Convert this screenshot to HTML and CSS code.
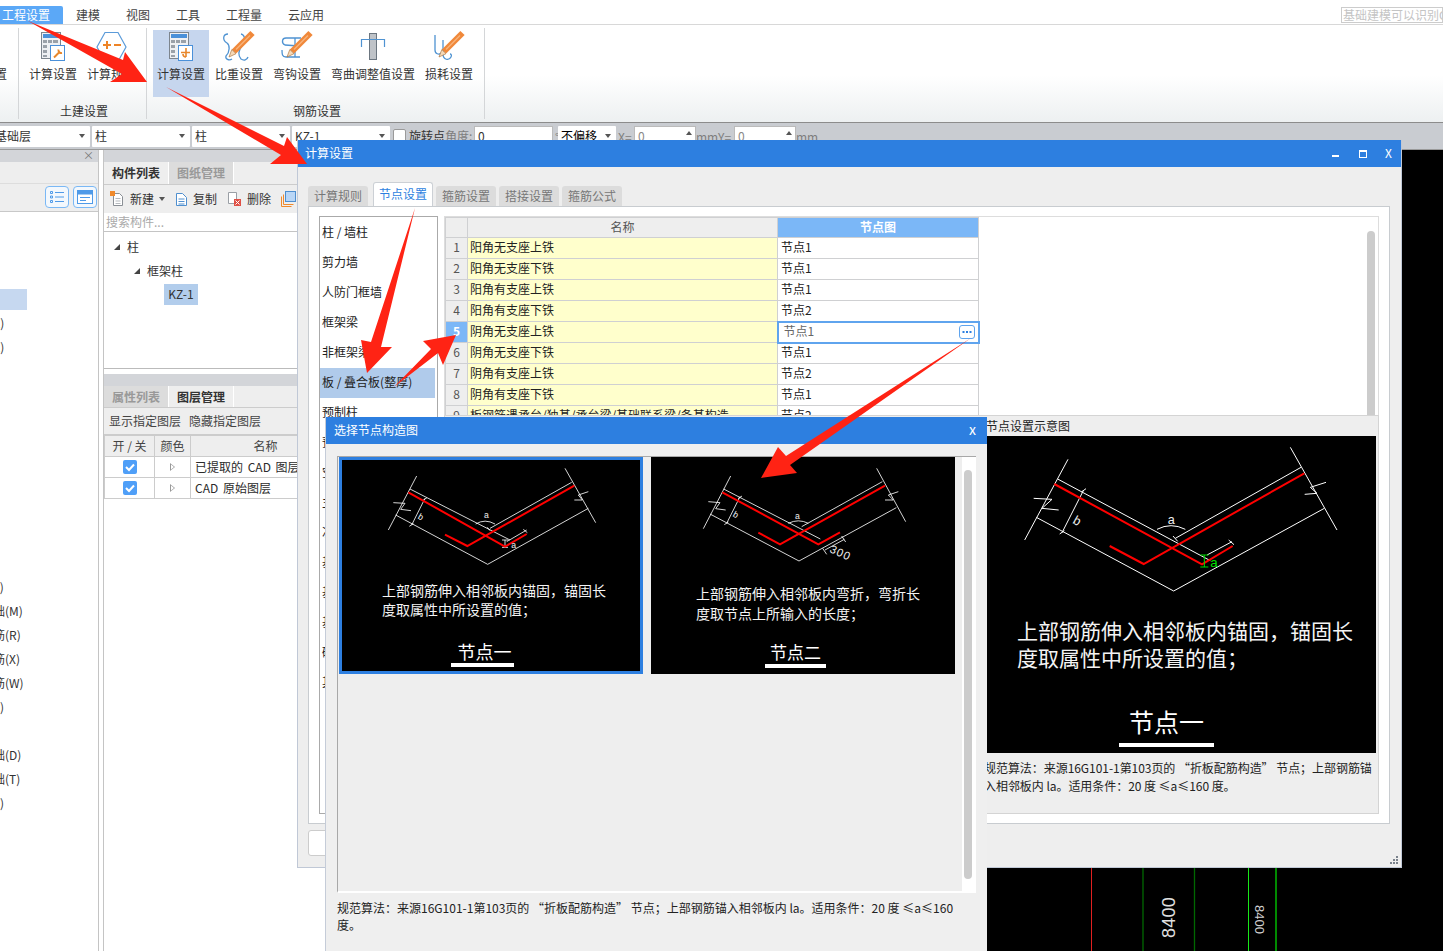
FILE: index.html
```html
<!DOCTYPE html>
<html lang="zh">
<head>
<meta charset="utf-8">
<title>计算设置</title>
<link rel="stylesheet" href="styles.css">
</head>
<body>
<svg class="defs" aria-hidden="true">
  <symbol id="calc" viewBox="0 0 40 32">
    <rect x="8.5" y="2.5" width="19" height="26" fill="#eef0f3" stroke="#7d858e"/>
    <rect x="10" y="4" width="16" height="4" fill="#4a90d9"/>
    <path d="M10 10h4v3h-4zM15 10h4v3h-4zM20 10h5v3h-5zM10 15h4v3h-4zM10 20h4v3h-4zM10 25h4v2h-4z" fill="#9aa1a9"/>
    <rect x="17.5" y="15.5" width="14" height="15" fill="#fff" stroke="#4a90d9"/>
  </symbol>
  <symbol id="pencil" viewBox="0 0 40 32">
    <path d="M33.5 3 15 21.500" stroke="#f0883a" stroke-width="6" fill="none"/>
    <path d="M31 5.500 17 19.500" stroke="#f7b27a" stroke-width="1.500" fill="none"/>
    <path d="M12.800 19.500 17 23.700 10 27z" fill="#f6d9b8" stroke="#a0662f" stroke-width=".6"/>
  </symbol>
</svg>

<div class="app">
  <header class="menu">
    <span class="menu-item active">工程设置</span>
    <span class="menu-item">建模</span>
    <span class="menu-item">视图</span>
    <span class="menu-item">工具</span>
    <span class="menu-item">工程量</span>
    <span class="menu-item">云应用</span>
    <span class="hint">基础建模可以识别CAD</span>
  </header>

  <section class="ribbon">
    <div class="group group-0">
      <div class="tools">
        <div class="tool"><svg class="tool-icon"></svg><span>全局设置</span></div>
      </div>
    </div>
    <div class="group">
      <div class="tools">
        <div class="tool">
          <svg class="tool-icon" viewBox="0 0 40 32"><use href="#calc"/><path d="M21 27.500 27 21.500M25.500 19.500a3 3 0 0 0 3.500 3.500" stroke="#e8872b" stroke-width="2" fill="none"/></svg>
          <span>计算设置</span>
        </div>
        <div class="tool">
          <svg class="tool-icon" viewBox="0 0 40 32"><path d="M14 2.500h13l8 14.500-8 14.500H14L6 17z" fill="#fff" stroke="#5b9bd9" stroke-width="1.200"/><path d="M12 15h8M16 11v8M23 15h7" stroke="#ee8427" stroke-width="2" fill="none"/></svg>
          <span>计算规则</span>
        </div>
      </div>
      <div class="group-label">土建设置</div>
    </div>
    <div class="group">
      <div class="tools">
        <div class="tool on">
          <svg class="tool-icon" viewBox="0 0 40 32"><use href="#calc"/><path d="M20 22.500h9M25 18v9M25 27a3 3 0 0 1-3-3" stroke="#e8872b" stroke-width="1.600" fill="none"/></svg>
          <span>计算设置</span>
        </div>
        <div class="tool">
          <svg class="tool-icon" viewBox="0 0 40 32"><path d="M9 4C4 4 3 10 8 13c3 2 3 9-1 13-1 3 3 5 6 3M22 4c5 1 4 9 1 12-4 4-4 10-1 13 3 2 6 1 7-2" fill="none" stroke="#4f93d2" stroke-width="1.300"/><use href="#pencil"/></svg>
          <span>比重设置</span>
        </div>
        <div class="tool">
          <svg class="tool-icon" viewBox="0 0 40 32"><path d="M24 8H9C5 8 4 13 8 15l14 1M5 20c0 4 0 7 4 7h14M18 8v19" fill="none" stroke="#4f93d2" stroke-width="1.300"/><use href="#pencil"/></svg>
          <span>弯钩设置</span>
        </div>
        <div class="tool">
          <svg class="tool-icon" viewBox="0 0 40 32"><rect x="16.500" y="3.500" width="7" height="26" fill="#bfc3c8" stroke="#6c7680"/><path d="M8.500 17V9.500h23V17" fill="none" stroke="#4f93d2" stroke-width="1.200"/></svg>
          <span>弯曲调整值设置</span>
        </div>
        <div class="tool">
          <svg class="tool-icon" viewBox="0 0 40 32"><path d="M6 5v15c0 4 4 5 6 3M14 10v14c0 6 6 7 8 3 1-2 0-3-1-3" fill="none" stroke="#4f93d2" stroke-width="1.300"/><use href="#pencil"/></svg>
          <span>损耗设置</span>
        </div>
      </div>
      <div class="group-label">钢筋设置</div>
    </div>
  </section>

  <section class="toolbar">
    <div class="sel first"><span>基础层</span><i class="caret"></i></div>
    <div class="sel"><span>柱</span><i class="caret"></i></div>
    <div class="sel"><span>柱</span><i class="caret"></i></div>
    <div class="sel"><span>KZ-1</span><i class="caret"></i></div>
    <span class="check-box"></span>
    <span class="tb-label">旋转点<em>角度:</em></span>
    <span class="num wide">0</span>
    <em class="tb-unit tb-deg">°</em>
    <div class="sel small"><span>不偏移</span><i class="caret"></i></div>
    <em class="tb-unit tb-x">X=</em>
    <span class="num">0<i class="up"></i></span>
    <em class="tb-unit tb-mmy">mmY=</em>
    <span class="num">0<i class="up"></i></span>
    <em class="tb-unit tb-mm">mm</em>
  </section>

  <main class="workspace">
    <aside class="left-panel">
      <div class="strip"><span class="strip-x">×</span></div>
      <div class="left-blank"></div>
      <div class="left-tools">
        <span class="view-btn"><svg width="16" height="14" viewBox="0 0 16 14"><path d="M1.500 1.500h2v2h-2zM1.500 6h2v2h-2zM1.500 10.500h2v2h-2z" fill="none" stroke="#4f9ae8"/><path d="M6 2.500h9M6 7h9M6 11.500h9" stroke="#4f9ae8"/></svg></span>
        <span class="view-btn"><svg width="16" height="14" viewBox="0 0 16 14"><rect x=".5" y=".5" width="15" height="13" fill="#fff" stroke="#4f9ae8"/><rect x=".5" y=".5" width="15" height="4" fill="#4f9ae8"/><path d="M3 7.500h10M3 10.500h6" stroke="#4f9ae8"/></svg></span>
      </div>
      <ul class="side-list">
        <li></li><li></li><li></li><li class="picked"></li>
        <li><span class="far">(Z)</span></li>
        <li><span class="far">(Z)</span></li>
        <li></li><li></li><li></li><li></li><li></li><li></li><li></li><li></li><li></li>
        <li><span class="far">(F)</span></li>
        <li><span class="near">础(M)</span></li>
        <li><span class="near">筋(R)</span></li>
        <li><span class="near">筋(X)</span></li>
        <li><span class="near">筋(W)</span></li>
        <li><span class="far">(X)</span></li>
        <li></li>
        <li><span class="near">础(D)</span></li>
        <li><span class="near">础(T)</span></li>
        <li><span class="far">(V)</span></li>
      </ul>
    </aside>

    <aside class="mid-panel">
      <div class="strip"></div>
      <div class="mid-tabs">
        <span class="mid-tab on">构件列表</span>
        <span class="mid-tab">图纸管理</span>
      </div>
      <div class="mid-tools">
        <svg class="mt-icon" width="15" height="16" viewBox="0 0 15 16"><path d="M3.500 2.500h6l3 3v9h-9z" fill="#fff" stroke="#8a8f95"/><path d="M5.500 7.500h5M5.500 10h5M5.500 12.500h5" stroke="#b5b9be"/><path d="M0 0h5v5H0z" fill="#f08a2c"/></svg>
        <span>新建</span><i class="caret"></i>
        <svg class="mt-icon gap" width="13" height="16" viewBox="0 0 13 16"><path d="M1.500 2.500h6l4 4v8h-10z" fill="#fff" stroke="#4f8fcf"/><path d="M3.500 8h6M3.500 10.500h6M3.500 13h6" stroke="#4f8fcf"/></svg>
        <span>复制</span>
        <svg class="mt-icon gap" width="15" height="16" viewBox="0 0 15 16"><path d="M1.500 1.500h8v11h-8z" fill="#fff" stroke="#9a9fa5"/><rect x="7" y="8" width="7" height="7" fill="#e05045"/><path d="M8.500 9.500l4 4M12.500 9.500l-4 4" stroke="#fff"/></svg>
        <span>删除</span>
        <svg class="mt-icon gap" width="15" height="16" viewBox="0 0 15 16"><path d="M.5 5.500v10h10" fill="none" stroke="#f08a2c"/><path d="M2.500 3.500v10h10" fill="none" stroke="#f08a2c"/><rect x="4.500" y=".5" width="10" height="10" fill="#b9d6f6" stroke="#4f8fcf"/></svg>
      </div>
      <div class="search">搜索构件...</div>
      <div class="tree">
        <div class="tree-row"><i class="tri"></i>柱</div>
        <div class="tree-row lvl2"><i class="tri"></i>框架柱</div>
        <div class="tree-row lvl3"><span>KZ-1</span></div>
      </div>
      <div class="mid-gap"></div>
      <div class="strip"></div>
      <div class="mid-tabs layers">
        <span class="mid-tab">属性列表</span>
        <span class="mid-tab on">图层管理</span>
      </div>
      <div class="layer-actions"><span>显示指定图层</span><span>隐藏指定图层</span></div>
      <table class="layer-table">
        <tr><th class="c1">开 / 关</th><th class="c2">颜色</th><th>名称</th></tr>
        <tr><td><span class="tick"><svg width="14" height="14" viewBox="0 0 14 14"><path d="M3 7l3 3 5-5.500" fill="none" stroke="#fff" stroke-width="2"/></svg></span></td><td><i class="play"></i></td><td class="name">已提取的 CAD 图层</td></tr>
        <tr><td><span class="tick"><svg width="14" height="14" viewBox="0 0 14 14"><path d="M3 7l3 3 5-5.500" fill="none" stroke="#fff" stroke-width="2"/></svg></span></td><td><i class="play"></i></td><td class="name">CAD 原始图层</td></tr>
      </table>
    </aside>

    <div class="canvas">
      <svg class="cad" width="1118" height="801" viewBox="325 150 1118 801">
        <path d="M1091.500 150v801" stroke="#e02020"/>
        <path d="M1143 150v801M1194.500 150v801" stroke="#006800" stroke-width="1.300"/>
        <path d="M1248.500 150v801" stroke="#18e818"/>
        <path d="M1276 150v801" stroke="#008a00" stroke-width="2"/>
        <text class="cad-big" transform="translate(1175 938) rotate(-90)">8400</text>
        <text class="cad-small" transform="translate(1255 905) rotate(90)">8400</text>
      </svg>
    </div>
  </main>
</div>

<section class="dialog settings">
  <div class="dlg-title">
    <span class="dlg-name">计算设置</span>
    <div class="win-btns">
      <i class="win-min"></i><i class="win-max"></i><span class="win-x">X</span>
    </div>
  </div>
  <div class="dlg-tabs">
    <span class="dlg-tab">计算规则</span>
    <span class="dlg-tab on">节点设置</span>
    <span class="dlg-tab">箍筋设置</span>
    <span class="dlg-tab">搭接设置</span>
    <span class="dlg-tab">箍筋公式</span>
  </div>
  <div class="dlg-panel">
    <ul class="cat-list">
      <li>柱 / 墙柱</li>
      <li>剪力墙</li>
      <li>人防门框墙</li>
      <li>框架梁</li>
      <li>非框架梁</li>
      <li class="on">板 / 叠合板(整厚)</li>
      <li>预制柱</li>
      <li>预制梁</li>
      <li>空心楼盖</li>
      <li>主肋梁</li>
      <li>次肋梁</li>
      <li>基础</li>
      <li>基础主梁</li>
      <li>基础次梁</li>
      <li>砌体结构</li>
      <li>其他</li>
    </ul>
    <div class="node-col">
      <div class="node-top">
        <table class="node-table">
          <colgroup><col class="n0"><col class="n1"><col class="n2"></colgroup>
          <tr><th></th><th>名称</th><th class="hl">节点图</th></tr>
          <tr><th>1</th><td class="y">阳角无支座上铁</td><td>节点1</td></tr>
          <tr><th>2</th><td class="y">阳角无支座下铁</td><td>节点1</td></tr>
          <tr><th>3</th><td class="y">阳角有支座上铁</td><td>节点1</td></tr>
          <tr><th>4</th><td class="y">阳角有支座下铁</td><td>节点2</td></tr>
          <tr><th class="hl">5</th><td class="y">阴角无支座上铁</td><td class="edit"><div class="edit-in"><span>节点1</span><span class="dots"><svg width="14" height="12" viewBox="0 0 14 12"><path d="M2.500 5h2v2h-2zM6 5h2v2H6zM9.500 5h2v2h-2z" fill="#2d7fe0"/></svg></span></div></td></tr>
          <tr><th>6</th><td class="y">阴角无支座下铁</td><td>节点1</td></tr>
          <tr><th>7</th><td class="y">阴角有支座上铁</td><td>节点2</td></tr>
          <tr><th>8</th><td class="y">阴角有支座下铁</td><td>节点1</td></tr>
          <tr><th>9</th><td class="y">板钢筋遇承台/独基/承台梁/基础联系梁/条基构造</td><td>节点2</td></tr>
        </table>
        <span class="node-scroll"></span>
      </div>
      <div class="node-preview">
        <div class="preview-title">节点设置示意图</div>
        <figure class="big-img">
          <svg width="389" height="181" viewBox="20 78 1167 543">
            <g class="w3">
              <path d="M263 148 133 390M930 112l140 248M232 207l458 245M962 172 585 385M168 322l412 221 452-248"/>
              <path d="M160 265l55 3-30 27 50 5M1037 217l-47 15 20 18-37 3"/>
              <path d="M310 240 245 368M303 246l14-10M238 372l14-10M530 358q42-22 85 0M578 378l14 16M680 435l75-40M745 390l16 14"/>
            </g>
            <path class="r5" d="M222 222l443 241 92-55M388 408l102 54 482-272"/>
            <path class="g3" d="M660 435h24M672 435v36M660 471h24"/>
            <text class="dim" x="562" y="341" font-size="38">a</text>
            <text class="dim" font-size="38" transform="translate(275 338) rotate(30)">b</text>
            <text class="dim green" x="690" y="472" font-size="40">a</text>
          </svg>
          <p class="big-text">上部钢筋伸入相邻板内锚固，锚固长<br>度取属性中所设置的值；</p>
          <div class="big-name">节点一</div>
        </figure>
        <p class="preview-desc">规范算法：来源16G101-1第103页的 “折板配筋构造” 节点；上部钢筋锚<br>入相邻板内 la。适用条件：20 度 ≤a≤160 度。</p>
      </div>
    </div>
  </div>
  <div class="dlg-foot"><button class="foot-btn">确定</button></div>
  <svg class="grip" width="9" height="9" viewBox="0 0 9 9"><path d="M6 0h2v2H6zM3 3h2v2H3zM6 3h2v2H6zM0 6h2v2H0zM3 6h2v2H3zM6 6h2v2H6z" fill="#7a828c"/></svg>
</section>

<section class="dialog chooser">
  <div class="dlg-title ch-title"><span class="dlg-name">选择节点构造图</span><span class="ch-x">x</span></div>
  <div class="ch-body">
    <div class="gallery">
      <div class="cards">
        <article class="card picked">
          <svg width="298" height="121" viewBox="36 30 894 363">
            <g class="w25">
              <path d="M260 78 175 240M705 55l92 163M240 117l300 153M725 97 480 235M197 195l276 148 302-168"/>
              <path d="M190 158l35 2-13 18 31 4M775 125l-30 10 12 15-24 0"/>
              <path d="M285 145l-40 80M279 151l12-8M238 229l12-8M437 222q28-17 58 0M472 232l8 10M530 275l60-35M580 238l12 10M516 270h18M525 270v22M516 292h18"/>
            </g>
            <path class="r5" d="M235 127l290 163 65-38M345 254l67 34 321-181"/>
            <text class="dim" x="462" y="204" font-size="26">a</text>
            <text class="dim" font-size="26" transform="translate(262 205) rotate(30)">b</text>
            <text class="dim" x="544" y="295" font-size="26">a</text>
          </svg>
          <p class="card-text">上部钢筋伸入相邻板内锚固，锚固长<br>度取属性中所设置的值；</p>
          <div class="card-name one">节点一</div>
        </article>
        <article class="card second">
          <svg width="298" height="123" viewBox="27 30 894 369">
            <g class="w25">
              <path d="M257 78 175 236M695 55l87 160M236 117l290 150M712 95 470 230M195 192l267 141 292-160"/>
              <path d="M190 155l35 3-13 18 30 4M760 125l-30 10 15 15-25 0"/>
              <path d="M285 140l-40 80M279 146l12-8M238 224l12-8M430 220q30-15 60 0M540 300l58-32M533 295l12 18M590 258l12 18"/>
            </g>
            <path class="r5" d="M232 127l288 156 65-36M340 248l65 35 315-176"/>
            <text class="dim" x="450" y="206" font-size="26">a</text>
            <text class="dim" font-size="26" transform="translate(262 198) rotate(30)">b</text>
            <text class="dim" font-size="34" letter-spacing="3" transform="translate(552 305) rotate(25)">300</text>
          </svg>
          <p class="card-text">上部钢筋伸入相邻板内弯折，弯折长<br>度取节点上所输入的长度；</p>
          <div class="card-name two">节点二</div>
        </article>
      </div>
      <div class="track"><span class="thumb"></span></div>
    </div>
    <p class="ch-desc">规范算法：来源16G101-1第103页的 “折板配筋构造” 节点；上部钢筋锚入相邻板内 la。适用条件：20 度 ≤a≤160<br>度。</p>
  </div>
</section>

<svg class="arrows" width="1443" height="951" viewBox="0 0 1443 951" aria-hidden="true">
  <polygon points="28,21 123,60 125,52 147,82 110,82 122,74"/>
  <polygon points="166,87 284,146 287,137 307,164 270,164 281,155"/>
  <polygon points="415,208 381,347 392,347 367,373 361,340 371,342"/>
  <polygon points="394,387 431,349 423,341 456,335 443,365 438,353"/>
  <polygon points="971,338 790,465 797,473 761,478 778,447 786,456"/>
</svg>
</body>
</html>
```

FILE: styles.css
```css
* { box-sizing: border-box; }
html, body { margin: 0; padding: 0; }
body {
  width: 1443px;
  height: 951px;
  overflow: hidden;
  position: relative;
  background: #fff;
  font: 12px/16px "Noto Sans CJK SC", "Liberation Sans", sans-serif;
  color: #2b2b2b;
}
ul { list-style: none; margin: 0; padding: 0; }
p { margin: 0; }
em, i { font-style: normal; }
.defs { position: absolute; width: 0; height: 0; }

.app { display: flex; flex-direction: column; height: 951px; }

/* menu */
.menu {
  height: 25px;
  padding-top: 6px;
  border-bottom: 1px solid #d8d8d8;
  display: flex;
  align-items: stretch;
  flex: none;
}
.menu-item { padding: 0 13px; color: #444; line-height: 17px; }
.menu-item.active {
  padding-left: 2px;
  background: #5ba8f7;
  color: #fff;
  border-radius: 0 2px 0 0;
}
.hint {
  margin: 1px 0 1px auto;
  width: 102px;
  height: 16px;
  border: 1px solid #ccc;
  color: #c4c4c4;
  font-size: 12px;
  line-height: 14px;
  white-space: nowrap;
  overflow: hidden;
  padding-left: 1px;
}

/* ribbon */
.ribbon {
  height: 98px;
  flex: none;
  padding-top: 3px;
  display: flex;
  border-bottom: 1px solid #8c8c8c;
  background: linear-gradient(#fff 0, #fff 52%, #edf0f1 100%);
}
.group {
  height: 91px;
  padding: 2px 7px 0 6px;
  border-right: 1px solid #d4d6d8;
  display: flex;
  flex-direction: column;
}
.group-0 { margin-left: -51px; }
.tools { display: flex; gap: 2px; }
.tool {
  height: 67px;
  padding: 0 4px;
  display: flex;
  flex-direction: column;
  align-items: center;
  color: #333;
  white-space: nowrap;
}
.tool.on { background: #c6d6ee; }
.tool-icon { width: 40px; height: 32px; margin-bottom: 4px; flex: none; }
.group-label { margin-top: auto; padding-left: 4px; text-align: center; color: #333; line-height: 16px; }

/* toolbar */
.toolbar {
  height: 27px;
  flex: none;
  padding-top: 3px;
  display: flex;
  align-items: flex-start;
  gap: 2px;
  background: #c9ccd1;
  border-bottom: 1px solid #9a9a9a;
  color: #333;
  white-space: nowrap;
}
.sel {
  width: 98px;
  height: 21px;
  background: #fff;
  padding: 0 5px 2px 3px;
  display: flex;
  justify-content: space-between;
  align-items: center;
  border-radius: 1px;
}
.sel.first { margin-left: -8px; }
.sel.small { width: 58px; color: #000; }
.caret {
  width: 0; height: 0;
  border: 3px solid transparent;
  border-top: 4px solid #555;
  border-bottom: 0;
  flex: none;
}
.check-box {
  width: 13px; height: 14px;
  margin: 3px 1px 0 1px;
  background: #fff;
  border: 1px solid #9a9a9a;
  border-radius: 2px;
}
.tb-label { width: 63px; line-height: 16px; margin-top: 2px; overflow: hidden; }
.tb-label em, .tb-unit { color: #7e7e7e; }
.tb-unit { line-height: 16px; margin-top: 3px; }
.tb-deg { width: 1px; }
.tb-x { width: 14px; }
.tb-mmy { width: 36px; margin-left: -2px; }
.tb-mm { margin-left: -2px; }
.num {
  width: 62px; height: 21px;
  background: #fff;
  border: 1px solid #bbb;
  border-bottom: 0;
  padding: 1px 0 0 3px;
  position: relative;
  color: #888;
  line-height: 16px;
}
.num.wide { width: 79px; color: #333; }
.up {
  position: absolute; right: 3px; top: 4px;
  border: 3px solid transparent;
  border-bottom: 4px solid #555;
  border-top: 0;
}

/* workspace */
.workspace { flex: 1; display: flex; min-height: 0; }
.strip {
  height: 12px;
  background: #d3d5d9;
  text-align: right;
  flex: none;
}
.strip-x {
  display: block;
  padding-right: 4px;
  font-size: 11px;
  line-height: 11px;
  color: #777;
}
.left-panel {
  width: 99px;
  flex: none;
  border-right: 1px solid #c4c4c4;
  display: flex;
  flex-direction: column;
  background: #fff;
  overflow: hidden;
}
.left-blank { height: 22px; background: #eee; border-bottom: 1px solid #ddd; flex: none; }
.left-tools {
  height: 28px;
  flex: none;
  background: #eee;
  border-bottom: 1px solid #c8c8c8;
  padding: 2px 1px 0 0;
  display: flex;
  justify-content: flex-end;
  gap: 4px;
}
.view-btn {
  width: 24px; height: 22px;
  border: 1px solid #7ab8f5;
  border-radius: 4px;
  background: #f3f8fd;
  display: flex;
  align-items: center;
  justify-content: center;
}
.side-list { padding-top: 1px; margin-top: 4px; }
.side-list li { height: 24px; line-height: 20px; white-space: nowrap; overflow: hidden; color: #333; }
.side-list li.picked { background: #c6d8f0; width: 27px; height: 21px; margin-bottom: 3px; }
.side-list .near { margin-left: -7px; display: block; }
.side-list .far { margin-left: -11px; display: block; }

.mid-panel {
  width: 222px;
  flex: none;
  margin-left: 4px;
  border-left: 1px solid #c4c4c4;
  display: flex;
  flex-direction: column;
  background: #fff;
  overflow: hidden;
}
.mid-tabs {
  height: 23px;
  flex: none;
  background: #eee;
  display: flex;
  border-bottom: 1px solid #ccc;
}
.mid-tab {
  width: 65px;
  background: #dcdcdc;
  color: #999;
  text-align: center;
  line-height: 22px;
  font-weight: 700;
  border-right: 1px solid #fff;
}
.mid-tab.on { background: #eee; color: #333; }
.mid-tools {
  height: 28px;
  flex: none;
  background: #eee;
  padding: 0 0 1px 6px;
  display: flex;
  align-items: center;
  gap: 5px;
  color: #333;
  white-space: nowrap;
}
.mt-icon.gap { margin-left: 5px; }
.search {
  height: 19px;
  flex: none;
  color: #aaa;
  padding-left: 2px;
  line-height: 17px;
  border-bottom: 1px solid #c4c4c4;
  background: #fff;
}
.tree {
  height: 137px;
  flex: none;
  border-bottom: 1px solid #bbb;
  padding-top: 3px;
  background: #fff;
}
.tree-row { height: 24px; display: flex; align-items: center; padding-left: 10px; color: #333; }
.lvl2 { padding-left: 30px; height: 23px; }
.lvl3 { padding-left: 60px; }
.lvl3 span {
  background: #b2cdec;
  width: 34px;
  height: 21px;
  line-height: 20px;
  text-align: center;
  display: block;
}
.tri {
  width: 0; height: 0;
  margin-right: 7px;
  border-left: 6px solid transparent;
  border-bottom: 6px solid #444;
}
.mid-gap { height: 5px; flex: none; background: #fff; }
.mid-tabs.layers { height: 22px; }
.layer-actions {
  height: 27px;
  flex: none;
  background: #eee;
  padding-left: 5px;
  display: flex;
  gap: 8px;
  align-items: center;
  color: #444;
  border-bottom: 1px solid #ccc;
}
.layer-table {
  width: 237px;
  flex: none;
  border-collapse: collapse;
  table-layout: fixed;
  background: #fff;
}
.layer-table th, .layer-table td {
  height: 21px;
  padding: 0 0 1px;
  border: 1px solid #ccc;
  text-align: center;
  font-weight: 400;
  white-space: nowrap;
  overflow: hidden;
  line-height: 16px;
}
.layer-table th { background: #eee; color: #444; }
.layer-table .c1 { width: 50px; }
.layer-table .c2 { width: 36px; }
.layer-table .name { text-align: left; padding-left: 4px; word-spacing: 2px; }
.tick {
  display: flex;
  width: 14px; height: 14px;
  margin: 1px auto 0;
  background: #4f9ff8;
  border-radius: 2px;
}
.tick svg { display: block; }
.play {
  display: block;
  width: 5px; height: 8px;
  margin: 1px auto 0;
  background: #999;
  clip-path: polygon(0 0, 100% 50%, 0 100%, 0 0, 20% 20%, 20% 80%, 80% 50%, 20% 20%);
}

.canvas { flex: 1; background: #000; position: relative; overflow: hidden; }
.cad { display: block; }
.cad-big { font: 18px "Liberation Sans", sans-serif; fill: #e0e0e0; letter-spacing: .2px; }
.cad-small { font: 13px "Liberation Sans", sans-serif; fill: #d0d0d0; }

/* dialogs */
.dialog { position: absolute; background: #eee; }
.settings {
  left: 297px; top: 140px;
  width: 1105px; height: 728px;
  border: 1px solid #c0c8d6;
  border-top: 0;
  display: flex;
  flex-direction: column;
}
.dlg-title {
  height: 27px;
  flex: none;
  background: #2d7fe0;
  color: #fff;
  padding-left: 7px;
  display: flex;
  align-items: center;
  justify-content: space-between;
  font-size: 12px;
}
.dlg-name { margin-bottom: 1px; }
.win-btns { display: flex; align-items: center; width: 72px; position: relative; height: 100%; }
.win-min { position: absolute; left: 3px; top: 15px; width: 7px; height: 2px; background: #fff; }
.win-max { position: absolute; left: 30px; top: 10px; width: 8px; height: 8px; border: 1px solid #fff; border-top-width: 2px; }
.win-x { position: absolute; left: 56px; top: 5px; font-size: 12px; }

.dlg-tabs {
  flex: none;
  height: 39px;
  padding: 15px 0 0 10px;
  display: flex;
  align-items: flex-end;
  gap: 3px;
}
.dlg-tab {
  width: 60px;
  height: 20px;
  background: #dcdcdc;
  color: #777;
  text-align: center;
  line-height: 19px;
  border-radius: 3px 3px 0 0;
}
.dlg-tab.on {
  height: 24px;
  margin-left: 2px;
  background: #fff;
  color: #2d7fe0;
  border: 1px solid #ccd0d5;
  border-bottom: 0;
  line-height: 21px;
}
.dlg-panel {
  flex: none;
  height: 618px;
  margin-left: 10px;
  width: 1082px;
  background: #fff;
  border: 1px solid #c8ccd0;
  padding: 9px 10px;
  display: flex;
  gap: 6px;
}
.cat-list {
  width: 119px;
  flex: none;
  border: 1px solid #aaa;
  padding: 1px 1px 0 0;
  color: #222;
  overflow: hidden;
}
.cat-list li { height: 30px; line-height: 28px; padding-left: 2px; white-space: nowrap; overflow: hidden; }
.cat-list li.on { background: #b0cbeb; margin-right: 1px; }
.node-col { flex: 1; display: flex; flex-direction: column; min-width: 0; }
.node-top {
  height: 199px;
  flex: none;
  position: relative;
  overflow: hidden;
  border: 1px solid #ddd;
  border-bottom: 0;
  background: #fff;
}
.node-table {
  border-collapse: collapse;
  table-layout: fixed;
  width: 533px;
  color: #222;
}
.n0 { width: 22px; }
.n1 { width: 310px; }
.n2 { width: 201px; }
.node-table th, .node-table td {
  height: 21px;
  padding: 0 3px 2px;
  border: 1px solid #cfd0d2;
  font-weight: 400;
  line-height: 16px;
  white-space: nowrap;
  overflow: hidden;
}
.node-table td.y { padding-left: 2px; }
.node-table tr:first-child th { height: 20px; }
.node-table th { background: #eee; text-align: center; color: #555; }
.node-table th.hl { background: #7bb7f7; color: #fff; font-weight: 700; }
.node-table .y { background: #ffc; }
.node-table td.edit { padding: 0; border: 2px solid #5fa4ee; }
.edit-in {
  display: flex;
  justify-content: space-between;
  align-items: center;
  padding: 0 3px 2px 5px;
  height: 17px;
  color: #666;
}
.dots {
  width: 16px; height: 14px;
  margin-top: 1px;
  border: 1px solid #5fa4ee;
  border-radius: 3px;
  display: flex;
}
.node-scroll {
  position: absolute;
  right: 3px; top: 14px; bottom: 0;
  width: 8px;
  background: #ccc;
  border-radius: 4px 4px 0 0;
}
.node-preview {
  flex: 1;
  background: #eee;
  border: 1px solid #d4d4d4;
  padding-left: 542px;
}
.preview-title { height: 20px; line-height: 20px; margin-left: -1px; white-space: nowrap; color: #222; }
.big-img { margin: 0; width: 389px; height: 317px; background: #000; color: #fff; overflow: hidden; }
.big-img svg { display: block; }
.big-text { font-size: 21px; line-height: 27px; padding-left: 30px; white-space: nowrap; color: #f4f4f4; }
.big-name {
  width: 95px;
  height: 44px;
  margin: 32px 0 0 132px;
  border-bottom: 4px solid #fff;
  font-size: 25px;
  line-height: 36px;
  text-align: center;
  white-space: nowrap;
}
.preview-desc { margin: 6px 0 0 -3px; line-height: 18px; white-space: nowrap; color: #222; letter-spacing: -.05px; }

.dlg-foot { flex: 1; padding: 6px 0 0 10px; }
.foot-btn {
  width: 64px; height: 26px;
  font: inherit;
  background: #fff;
  border: 1px solid #ccc;
  border-radius: 3px;
}
.grip { position: absolute; right: 2px; bottom: 2px; }

.chooser {
  left: 325px; top: 417px;
  width: 662px; height: 534px;
  border-left: 1px solid #c5ccd8;
  background: #efefef;
  display: flex;
  flex-direction: column;
}
.ch-title { padding-left: 8px; padding-right: 11px; }
.ch-x { font-size: 14px; line-height: 14px; margin-bottom: 4px; }
.ch-body { padding: 12px 11px 0; flex: 1; }
.gallery {
  width: 639px;
  height: 437px;
  border-top: 1px solid #a8a8a8;
  border-left: 1px solid #a8a8a8;
  border-bottom: 2px solid #fff;
  display: flex;
  background: #eee;
}
.cards { flex: 1; padding-left: 1px; display: flex; gap: 8px; align-items: flex-start; }
.card {
  width: 304px;
  height: 217px;
  border: 3px solid #000;
  background: #000;
  color: #fff;
}
.card.picked { border-color: #2d7fe0; }
.card svg { display: block; }
.card-text { font-size: 14px; line-height: 19px; white-space: nowrap; padding-left: 40px; color: #f4f4f4; }
.second .card-text { line-height: 20px; padding-left: 42px; }
.card-name {
  height: 28px;
  border-bottom: 4px solid #fff;
  line-height: 24px;
  text-align: center;
  white-space: nowrap;
}
.card-name.one { width: 63px; margin: 20px 0 0 109px; padding-left: 4px; font-size: 18px; }
.card-name.two { width: 61px; margin: 17px 0 0 111px; font-size: 17px; }
.track { width: 14px; background: #fff; flex: none; padding: 13px 4px 0 2px; }
.thumb { display: block; width: 8px; height: 409px; background: #ccc; border-radius: 4px; }
.ch-desc { margin-top: 6px; line-height: 17px; color: #222; white-space: nowrap; }

/* drawings */
.w3 path { fill: none; stroke: #fff; stroke-width: 3; }
.w25 path { fill: none; stroke: #fff; stroke-width: 2.500; }
.r5 { fill: none; stroke: #ff0000; stroke-width: 6; }
.g3 { fill: none; stroke: #00e000; stroke-width: 3; }
.dim { font-family: "Liberation Sans", sans-serif; fill: #f0f0f0; }
.dim.green { fill: #00e000; }

/* overlay arrows */
.arrows { position: absolute; left: 0; top: 0; pointer-events: none; }
.arrows polygon { fill: #ff2314; }
```
